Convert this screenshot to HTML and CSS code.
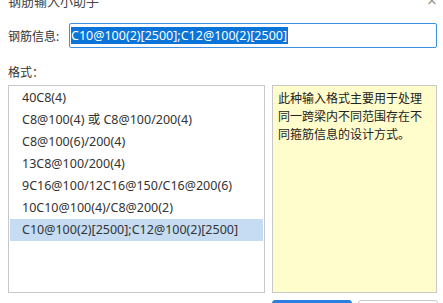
FILE: index.html
```html
<!DOCTYPE html>
<html lang="zh-CN">
<head>
    <meta charset="UTF-8">
    <title>钢筋输入小助手</title>
    <link rel="stylesheet" href="styles.css">
</head>
<body>
    <div class="dialog">
        <div class="title-bar">
            <span class="title">钢筋输入小助手</span>
            <span class="close-btn">&times;</span>
        </div>

        <div class="field-row">
            <label class="field-label">钢筋信息:</label>
            <div class="field-input"><span class="sel">C10@100(2)[2500];C12@100(2)[2500]</span></div>
        </div>

        <div class="format-label">格式：</div>

        <div class="panels">
            <ul class="format-list">
                <li>40C8(4)</li>
                <li>C8@100(4) 或 C8@100/200(4)</li>
                <li>C8@100(6)/200(4)</li>
                <li>13C8@100/200(4)</li>
                <li>9C16@100/12C16@150/C16@200(6)</li>
                <li>10C10@100(4)/C8@200(2)</li>
                <li class="active">C10@100(2)[2500];C12@100(2)[2500]</li>
            </ul>
            <div class="desc">此种输入格式主要用于处理同一跨梁内不同范围存在不同箍筋信息的设计方式。</div>
        </div>

        <div class="buttons">
            <button class="ok-btn">确定</button>
            <button class="cancel-btn">取消</button>
        </div>
    </div>
</body>
</html>
```

FILE: styles.css
```css
body {
    margin: 0;
    background-color: #fff;
    font-family: "Noto Sans", "Noto Sans CJK SC", sans-serif;
    font-size: 12px;
    color: #333;
    overflow: hidden;
}
.dialog {
    width: 443px;
    height: 303px;
    overflow: hidden;
}
.title-bar {
    display: flex;
    justify-content: space-between;
    align-items: center;
    height: 18px;
    margin-top: -9px;
    padding: 0 6px 0 8px;
}
.title {
    font-size: 13px;
    color: #444;
}
.close-btn {
    font-size: 18px;
    color: #999;
    line-height: 18px;
}
.field-row {
    display: flex;
    align-items: center;
    margin-top: 14px;
    padding-left: 8px;
}
.field-label {
    width: 61px;
}
.field-input {
    width: 365px;
    height: 23px;
    border: 1px solid #3d8fe0;
    border-radius: 2px;
    display: flex;
    align-items: center;
    padding-left: 1px;
}
.sel {
    background-color: #0a74d8;
    color: #fff;
    font-size: 12.5px;
    line-height: 17px;
    padding-right: 1px;
}
.format-label {
    margin-top: 16px;
    padding-left: 8px;
    line-height: 18px;
}
.panels {
    display: flex;
    gap: 7px;
    margin-top: 3px;
    padding-left: 8px;
    height: 208px;
}
.format-list {
    list-style: none;
    margin: 0;
    padding: 1px;
    width: 253px;
    border: 1px solid #c8c8c8;
    background-color: #fff;
}
.format-list li {
    height: 22px;
    line-height: 22px;
    padding-left: 12px;
    font-size: 12.5px;
    white-space: nowrap;
}
.format-list li.active {
    background-color: #c6dcf2;
}
.desc {
    width: 154px;
    border: 1px solid #c8c8c8;
    background-color: #fffdcc;
    padding: 4px 4px 0 5px;
    line-height: 18px;
    color: #222;
}
.buttons {
    display: flex;
    gap: 6px;
    margin-top: 7px;
    padding-left: 272px;
}
.buttons button {
    width: 80px;
    height: 26px;
    border-radius: 3px;
    font-family: inherit;
    font-size: 12px;
}
.ok-btn {
    background-color: #2a7fe0;
    border: 1px solid #2a7fe0;
    color: #fff;
}
.cancel-btn {
    background-color: #fff;
    border: 1px solid #c8c8c8;
    color: #333;
}
```
